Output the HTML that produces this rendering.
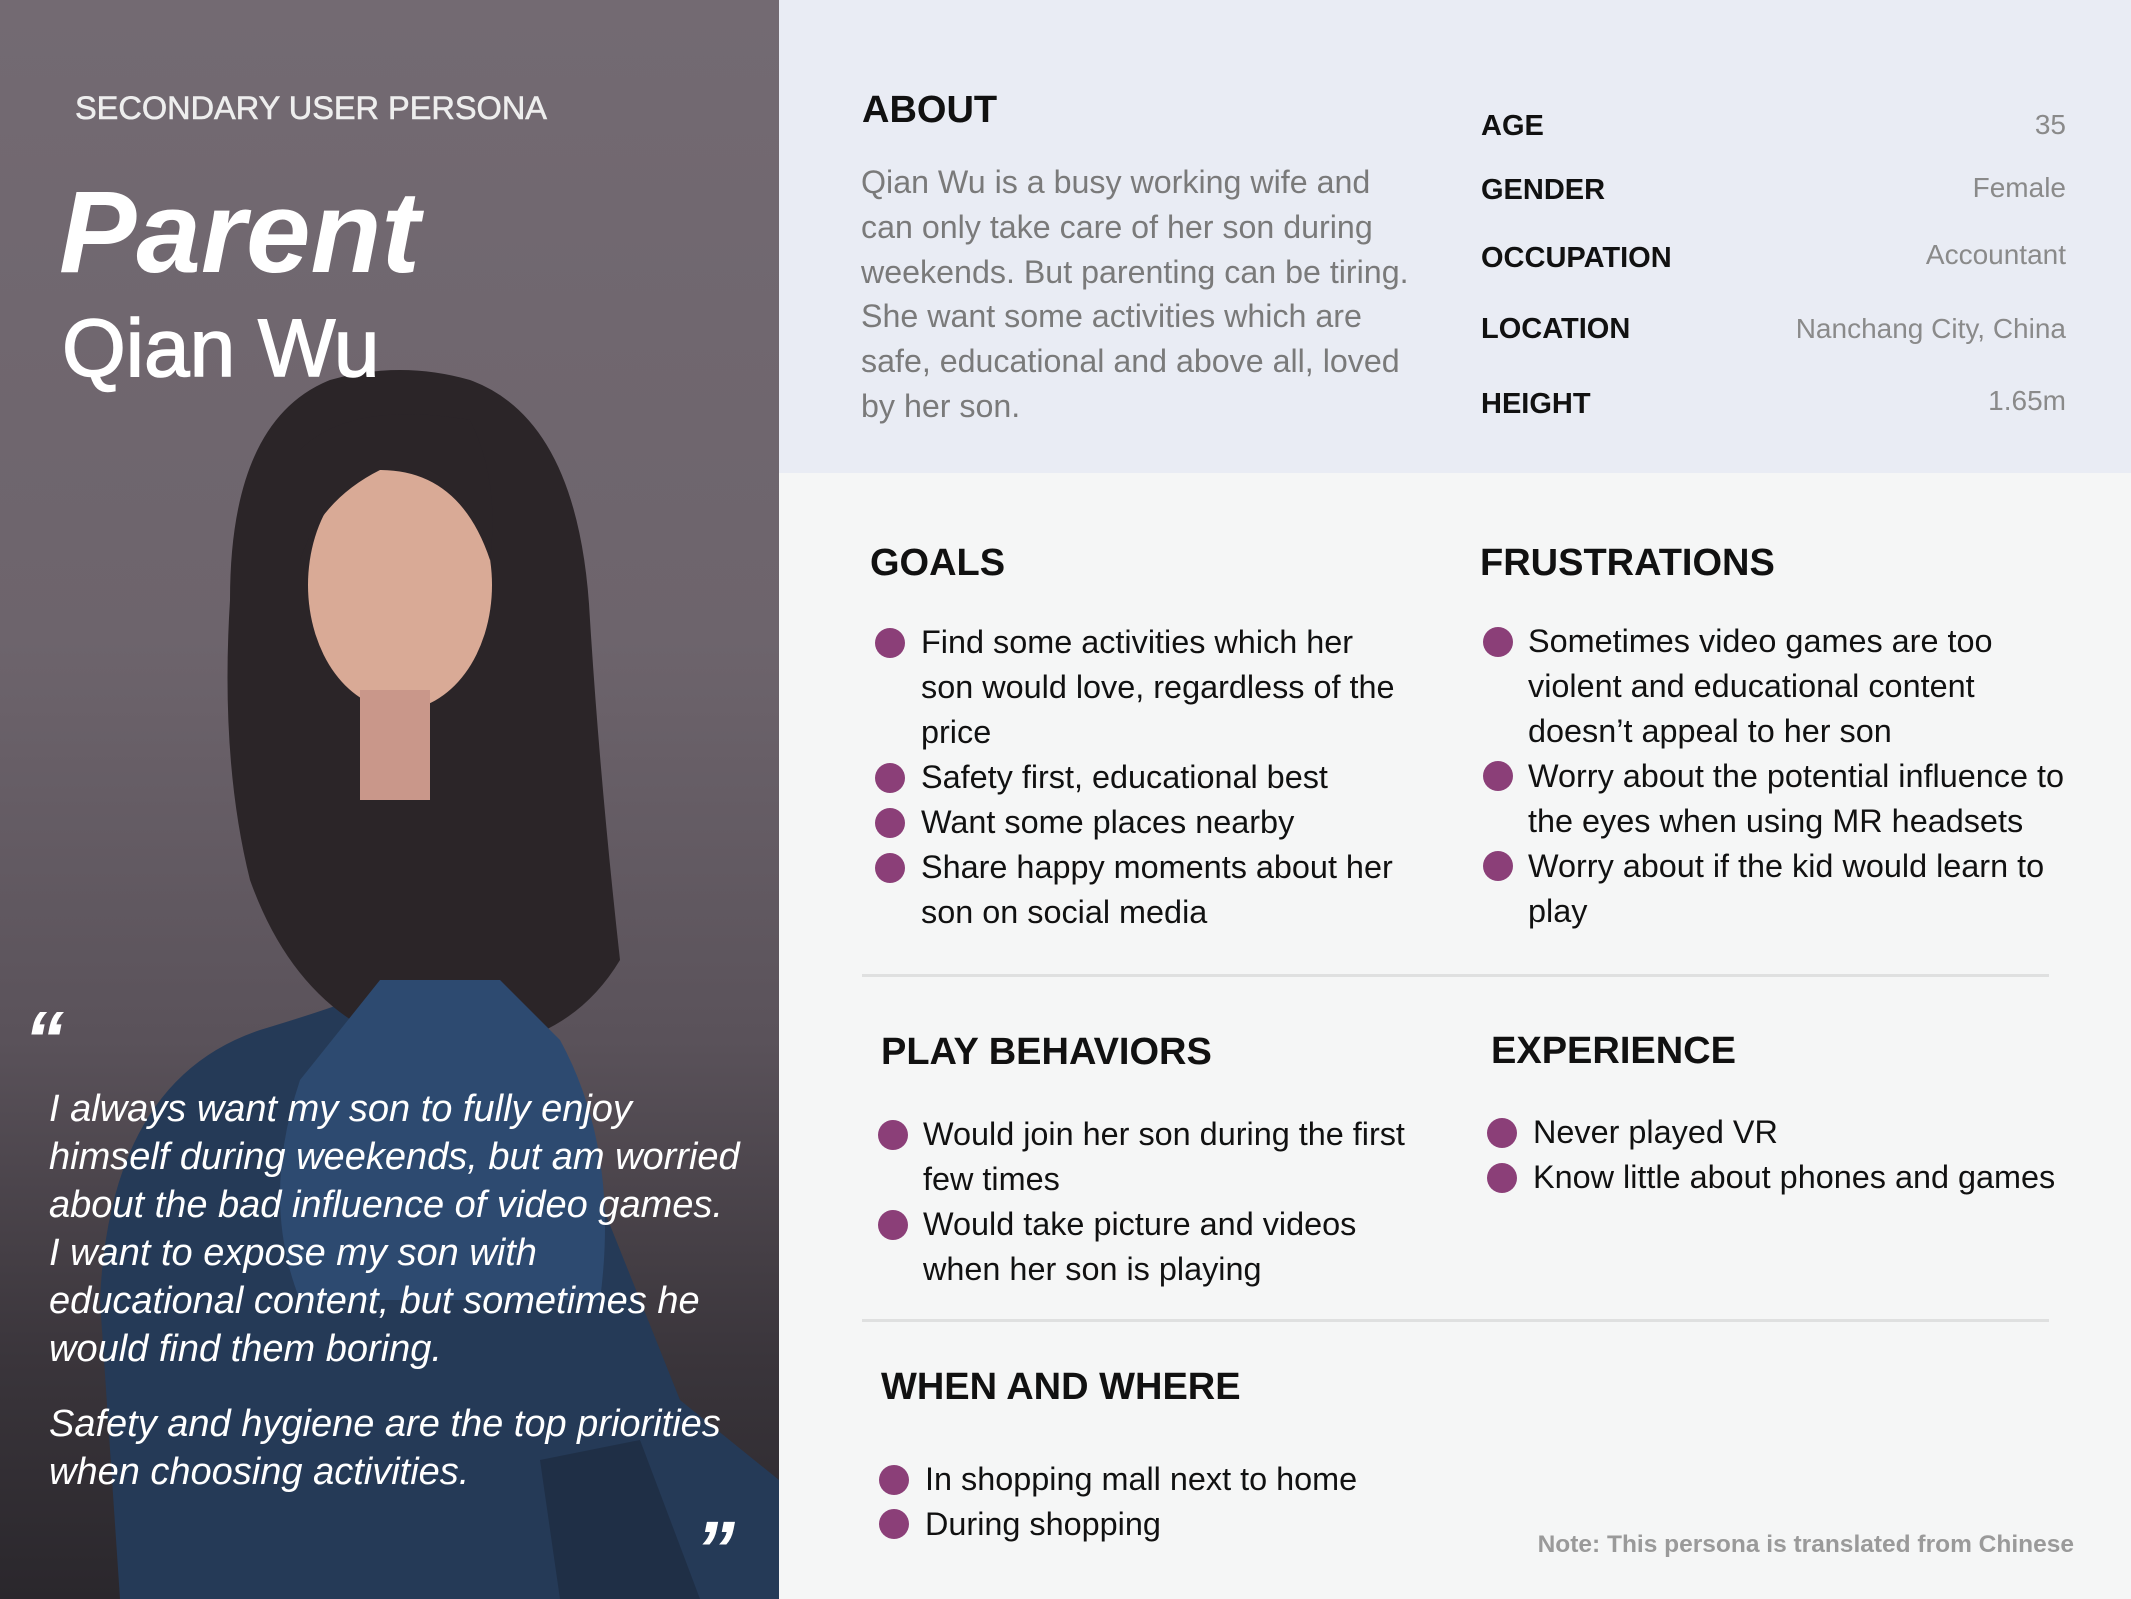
<!DOCTYPE html>
<html><head><meta charset="utf-8"><style>
*{margin:0;padding:0;box-sizing:border-box}
body{width:2131px;height:1599px;position:relative;overflow:hidden;font-family:"Liberation Sans",Arial,sans-serif;background:#f5f6f6}
.a{position:absolute;white-space:nowrap}
.h{font-weight:bold;font-size:38px;color:#111}
.li{font-size:32.4px;color:#111;line-height:45px}
.dot{position:absolute;width:30px;height:30px;border-radius:50%;background:#8b3f78}
.lab{font-weight:bold;font-size:29px;color:#111;left:1481px}
.val{font-size:28px;color:#8a8a8a;right:65px}
.q{font-style:italic;font-size:38px;color:#fff;left:49px;line-height:48px}
</style></head><body>
<div class="a" style="left:0;top:0;width:779px;height:1599px;overflow:hidden;background:linear-gradient(#736a72 0%,#6d646c 40%,#5a525a 65%,#3a353b 85%,#2a272c 100%)">
<svg width="779" height="1599" viewBox="0 0 779 1599" style="position:absolute;left:0;top:0">
<path d="M120 1599 L100 1300 Q110 1080 260 1030 Q360 1000 400 980 L520 1000 Q590 1060 600 1200 L680 1400 L779 1480 L779 1599 Z" fill="#253a57"/>
<path d="M330 380 Q230 420 230 600 Q220 760 250 880 Q300 1020 420 1050 Q560 1060 620 960 Q600 780 590 620 Q580 420 470 380 Q400 360 330 380 Z" fill="#2b2528"/>
<path d="M380 980 L300 1080 Q260 1200 300 1300 L600 1300 Q620 1150 560 1040 L500 980 Z" fill="#2d4a70"/>
<ellipse cx="400" cy="585" rx="92" ry="125" fill="#d9aa96"/>
<rect x="360" y="690" width="70" height="110" fill="#c9978a"/>
<path d="M300 450 Q350 400 470 420 Q500 480 490 560 Q460 470 380 470 Q320 500 300 560 Z" fill="#2b2528"/>
<path d="M540 1460 L640 1440 L700 1599 L560 1599 Z" fill="#1f2f46"/>
</svg>
</div>
<div class="a" style="left:75px;top:90px;font-size:32.5px;color:#eee;-webkit-text-stroke:0.6px #eee">SECONDARY USER PERSONA</div>
<div class="a" style="left:59px;top:168px;font-size:116px;font-weight:bold;font-style:italic;color:#fff;line-height:128px">Parent</div>
<div class="a" style="left:62px;top:302px;font-size:82px;color:#fff;line-height:94px;-webkit-text-stroke:1.5px #fff">Qian Wu</div>
<div class="a" style="left:24px;top:995px;font-size:80px;font-weight:bold;font-style:italic;color:#fff;line-height:90px">“</div>
<div class="a q" style="top:1085px">I always want my son to fully enjoy<br>himself during weekends, but am worried<br>about the bad influence of video games.<br>I want to expose my son with<br>educational content, but sometimes he<br>would find them boring.</div>
<div class="a q" style="top:1400px">Safety and hygiene are the top priorities<br>when choosing activities.</div>
<div class="a" style="left:695px;top:1505px;font-size:80px;font-weight:bold;font-style:italic;color:#fff;line-height:90px">”</div>

<div class="a" style="left:779px;top:0;width:1352px;height:473px;background:#e9ecf4"></div>
<div class="a h" style="left:862px;top:89px">ABOUT</div>
<div class="a" style="left:861px;top:160px;font-size:32.2px;color:#7a7a7a;line-height:44.8px">Qian Wu is a busy working wife and<br>can only take care of her son during<br>weekends. But parenting can be tiring.<br>She want some activities which are<br>safe, educational and above all, loved<br>by her son.</div>
<div class="a lab" style="top:110px">AGE</div><div class="a val" style="top:109px">35</div>
<div class="a lab" style="top:174px">GENDER</div><div class="a val" style="top:172px">Female</div>
<div class="a lab" style="top:242px">OCCUPATION</div><div class="a val" style="top:239px">Accountant</div>
<div class="a lab" style="top:313px">LOCATION</div><div class="a val" style="top:313px">Nanchang City, China</div>
<div class="a lab" style="top:388px">HEIGHT</div><div class="a val" style="top:385px">1.65m</div>

<div class="a h" style="left:870px;top:542px">GOALS</div>
<div class="dot" style="left:875px;top:628px"></div><div class="dot" style="left:875px;top:763px"></div><div class="dot" style="left:875px;top:808px"></div><div class="dot" style="left:875px;top:853px"></div>
<div class="a li" style="left:921px;top:620px">Find some activities which her<br>son would love, regardless of the<br>price<br>Safety first, educational best<br>Want some places nearby<br>Share happy moments about her<br>son on social media</div>

<div class="a h" style="left:1480px;top:542px">FRUSTRATIONS</div>
<div class="dot" style="left:1483px;top:627px"></div><div class="dot" style="left:1483px;top:761px"></div><div class="dot" style="left:1483px;top:851px"></div>
<div class="a li" style="left:1528px;top:619px">Sometimes video games are too<br>violent and educational content<br>doesn’t appeal to her son<br>Worry about the potential influence to<br>the eyes when using MR headsets<br>Worry about if the kid would learn to<br>play</div>

<div class="a" style="left:862px;top:974px;width:1187px;height:3px;background:#dfe0e0"></div>

<div class="a h" style="left:881px;top:1031px">PLAY BEHAVIORS</div>
<div class="dot" style="left:878px;top:1120px"></div><div class="dot" style="left:878px;top:1210px"></div>
<div class="a li" style="left:923px;top:1112px">Would join her son during the first<br>few times<br>Would take picture and videos<br>when her son is playing</div>

<div class="a h" style="left:1491px;top:1030px">EXPERIENCE</div>
<div class="dot" style="left:1487px;top:1118px"></div><div class="dot" style="left:1487px;top:1163px"></div>
<div class="a li" style="left:1533px;top:1110px">Never played VR<br>Know little about phones and games</div>

<div class="a" style="left:862px;top:1319px;width:1187px;height:3px;background:#dfe0e0"></div>

<div class="a h" style="left:881px;top:1366px">WHEN AND WHERE</div>
<div class="dot" style="left:879px;top:1465px"></div><div class="dot" style="left:879px;top:1509px"></div>
<div class="a li" style="left:925px;top:1457px">In shopping mall next to home<br>During shopping</div>

<div class="a" style="right:57px;top:1531px;font-size:24.5px;font-weight:bold;color:#9a9a9a">Note: This persona is translated from Chinese</div>
</body></html>
